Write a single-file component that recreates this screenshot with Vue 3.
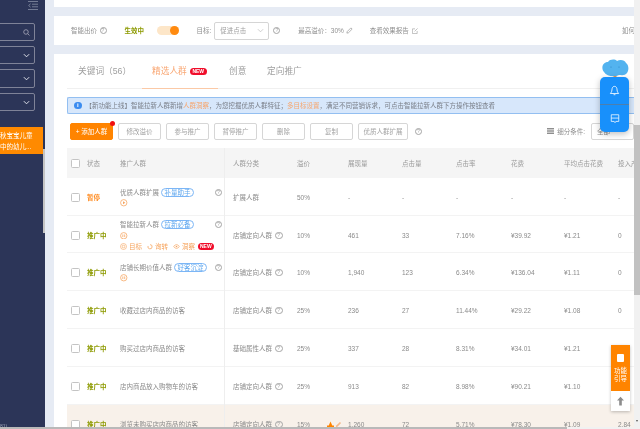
<script setup>
const buttons = ['修改溢价', '参与推广', '暂停推广', '删除', '复制']
const columns = ['展现量', '点击量', '点击率', '花费', '平均点击花费', '投入产']
const rows = [
  { paused: true, name: '优质人群扩展', tag: '补量助手', icon: 'play', help: true, category: '扩展人群', noHelp: true, premium: '50%', values: ['-', '-', '-', '-', '-', '-'] },
  { name: '智能拉新人群', tag: '拉新必备', icon: 'pause', help: true, extras: true, category: '店铺定向人群', premium: '10%', values: ['461', '33', '7.16%', '¥39.92', '¥1.21', '0'] },
  { name: '店铺长期价值人群', tag: '好客沉淀', icon: 'pause', help: true, category: '店铺定向人群', premium: '10%', values: ['1,940', '123', '6.34%', '¥136.04', '¥1.11', '0'] },
  { name: '收藏过店内商品的访客', category: '店铺定向人群', premium: '25%', values: ['236', '27', '11.44%', '¥29.22', '¥1.08', '0'] },
  { name: '购买过店内商品的访客', category: '基础属性人群', premium: '25%', values: ['337', '28', '8.31%', '¥34.01', '¥1.21', '0'] },
  { name: '店内商品放入购物车的访客', category: '店铺定向人群', premium: '25%', values: ['913', '82', '8.98%', '¥90.21', '¥1.10', '0'] },
  { name: '浏览未购买店内商品的访客', category: '店铺定向人群', premium: '15%', hot: true, values: ['1,260', '72', '5.71%', '¥78.30', '¥1.09', '2.84'] }
]
</script>

<template>
  <div class="page">
    <div class="body">
      <aside class="side">
        <svg class="menu-icon" viewBox="0 0 10 9" width="10" height="9">
          <path d="M0 .5h10M4 3.2h6M4 5.8h6M0 8.5h10M2.6 2.8 .6 4.5l2 1.7" fill="none" stroke="#7d849c" stroke-width=".9" />
        </svg>
        <div class="side-field search">
          <svg viewBox="0 0 8 8" width="7" height="7"><circle cx="3.4" cy="3.4" r="2.6" fill="none" stroke="#aab" stroke-width=".9" /><path d="M5.4 5.4 7.4 7.4" stroke="#aab" stroke-width=".9" /></svg>
        </div>
        <div v-for="n in 3" :key="n" class="side-field" :class="'sel' + n">
          <svg viewBox="0 0 8 5" width="7" height="5"><path d="M1 1l3 3 3-3" fill="none" stroke="#e4e6ee" stroke-width="1.1" /></svg>
        </div>
        <div class="side-active">
          <span>秋宝宝儿童</span>
          <span>中的幼儿...</span>
        </div>
        <div class="side-thumb"></div>
        <span class="side-foot">81)</span>
      </aside>

      <main class="main">
        <div class="card stub"></div>

        <section class="card bid">
          <span class="muted">智能出价</span><i class="q bid-q">?</i>
          <span class="live">生效中</span>
          <span class="toggle"><b></b></span>
          <span class="muted goal">目标:</span>
          <span class="goal-select">促进点击
            <svg viewBox="0 0 8 5" width="7" height="5"><path d="M1 1l3 3 3-3" fill="none" stroke="#bbb" stroke-width=".8" /></svg>
          </span>
          <i class="q goal-q">?</i>
          <span class="muted cap">最高溢价：30%</span>
          <svg class="pen" viewBox="0 0 8 8" width="7" height="7"><path d="M1 7l.4-1.8L5.6 1 7 2.4 2.8 6.6z" fill="none" stroke="#888" stroke-width=".7" /></svg>
          <span class="muted report">查看效果报告</span>
          <svg class="ext" viewBox="0 0 7 7" width="6" height="6"><path d="M6 3.5V6.5H.5V1H3.5M3 4 6.5.5" fill="none" stroke="#999" stroke-width=".7" /></svg>
          <span class="muted how">如何</span>
        </section>

        <section class="card panel">
          <nav class="tabs">
            <span class="tab t1">关键词（56）</span>
            <span class="tab t2 on">精选人群<em class="new big">NEW</em></span>
            <span class="tab t3">创意</span>
            <span class="tab t4">定向推广</span>
          </nav>

          <div class="notice">
            <span class="info">i</span>
            <span>【新功能上线】智能拉新人群新增<a>人群洞察</a>，为您挖掘优质人群特征；<a>多目标设置</a>，满足不同营销诉求，可点击智能拉新人群下方操作按钮查看</span>
          </div>

          <div class="actions">
            <button class="btn primary">+ 添加人群<i class="dot"></i></button>
            <button v-for="b in buttons" :key="b" class="btn">{{ b }}</button>
            <button class="btn wide">优质人群扩展</button>
            <i class="q act-q">?</i>
            <span class="filter">
              <svg viewBox="0 0 8 6" width="7" height="6"><path d="M0 .5h8M0 3h8M0 5.5h8" stroke="#555" stroke-width="1.1" /></svg>
              <span class="muted">细分条件:</span>
              <span class="filter-select">全部</span>
            </span>
          </div>

          <div class="table">
            <div class="row head">
              <span class="c-check"><i class="box"></i></span>
              <span class="c-status">状态</span>
              <span class="c-name">推广人群</span>
              <span class="c-cat">人群分类</span>
              <span>溢价</span>
              <span v-for="c in columns" :key="c">{{ c }}</span>
            </div>
            <div v-for="r in rows" :key="r.name" class="row" :class="{ hot: r.hot }">
              <span class="c-check"><i class="box"></i></span>
              <span class="c-status" :class="r.paused ? 'paused' : 'running'">{{ r.paused ? '暂停' : '推广中' }}</span>
              <div class="c-name">
                <div class="line">
                  <span>{{ r.name }}</span>
                  <span v-if="r.tag" class="pill">{{ r.tag }}</span>
                  <i v-if="r.help" class="q name-q">?</i>
                </div>
                <div v-if="r.icon" class="line">
                  <svg viewBox="0 0 8 8" width="7.5" height="7.5">
                    <circle cx="4" cy="4" r="3.4" fill="none" stroke="#f6a35c" stroke-width=".8" />
                    <path v-if="r.icon === 'play'" d="M3.2 2.4 5.6 4 3.2 5.6z" fill="#f6a35c" />
                    <path v-else d="M3 2.6v2.8M5 2.6v2.8" stroke="#f6a35c" stroke-width=".8" />
                  </svg>
                </div>
                <div v-if="r.extras" class="line links">
                  <svg viewBox="0 0 8 8" width="7" height="7"><circle cx="4" cy="4" r="3.4" fill="none" stroke="#f6a35c" stroke-width=".7" /><circle cx="4" cy="4" r="1.5" fill="none" stroke="#f6a35c" stroke-width=".7" /></svg>
                  <span>目标</span>
                  <svg class="gap" viewBox="0 0 8 8" width="6" height="7"><path d="M4 1.5a2.8 2.8 0 1 1-2.6 1.8" fill="none" stroke="#f6a35c" stroke-width="1" /></svg>
                  <span>询转</span>
                  <svg class="gap" viewBox="0 0 8 6" width="7" height="5"><path d="M.5 3Q4-1.5 7.5 3 4 7.5.5 3z" fill="none" stroke="#f6a35c" stroke-width=".8" /><circle cx="4" cy="3" r="1" fill="#f6a35c" /></svg>
                  <span>洞察</span>
                  <em class="new">NEW</em>
                </div>
              </div>
              <span class="c-cat">{{ r.category }}<i v-if="!r.noHelp" class="q cat-q">?</i></span>
              <span class="c-premium">{{ r.premium }}
                <span v-if="r.hot" class="marks">
                  <svg viewBox="0 0 8 8" width="7" height="7"><path d="M4 .5 6 5H8V7.5H0V5H2z" fill="#ff8400" /></svg>
                  <svg viewBox="0 0 8 8" width="7" height="7"><path d="M1 7l.4-1.8L5.6 1 7 2.4 2.8 6.6z" fill="#f6b98a" /></svg>
                </span>
              </span>
              <span v-for="(v, i) in r.values" :key="i">{{ v }}</span>
            </div>
          </div>
        </section>
      </main>

      <div class="vbar"><div class="vthumb"></div><i class="arrow"></i></div>
    </div>
    <div class="hbar"><div class="hthumb"></div></div>

    <div class="assistant">
      <svg class="cloud" viewBox="0 0 28 20" width="28" height="20">
        <path d="M3 13C-.5 9 2 3 7 3 9 0 14 0 16 2 19 0 24 1 25 4 28 6 28 11 26 14 24 17 20 16 18 16 14 18 6 18 3 13Z" fill="#53b3ef" />
        <path d="M12.5 17h3v3h-3z" fill="#e79a4a" />
        <circle cx="10" cy="8" r=".6" fill="#2c86c8" /><circle cx="18" cy="8" r=".6" fill="#2c86c8" />
      </svg>
      <div class="assist-panel">
        <div class="assist-item">
          <svg viewBox="0 0 12 12" width="11" height="11"><path d="M6 1.5C3.8 1.5 3.3 3.5 3.2 5.5 3.1 7.5 2 8.5 1.5 9.3H10.5C10 8.5 8.9 7.5 8.8 5.5 8.7 3.5 8.2 1.5 6 1.5ZM5 10.6H7" fill="none" stroke="#fff" stroke-width=".9" /></svg>
        </div>
        <div class="assist-item">
          <svg viewBox="0 0 12 12" width="10" height="11"><path d="M1.5 1.5H10.5V9.5H7L6 11 5 9.5H1.5ZM1.5 5.5H10.5" fill="none" stroke="#fff" stroke-width=".9" /></svg>
        </div>
      </div>
    </div>

    <div class="guide">
      <div class="guide-main">
        <i class="doc"></i>
        <span>功能</span>
        <span>引导</span>
      </div>
      <div class="guide-top">
        <svg viewBox="0 0 8 10" width="7" height="10"><path d="M4 0 8 4.5H5.5V10h-3V4.5H0z" fill="#8c8c8c" /></svg>
      </div>
    </div>
  </div>
</template>

<style>
html, body { margin: 0; overflow: hidden; }
</style>

<style scoped>
.page {
  position: relative;
  width: 640px;
  height: 429px;
  overflow: hidden;
  display: flex;
  flex-direction: column;
  background: #e6ebf4;
  font: 6.5px/11px "Liberation Sans", "Noto Sans CJK SC", sans-serif;
  color: #8a8a8a;
  filter: blur(.4px);
}
i, em { font-style: normal; }
.body { flex: 1; min-height: 0; display: flex; }
.hbar { height: 2px; background: #f1f1f1; }
.hthumb { width: 567px; height: 2px; background: #b9b9b9; }

.side {
  position: relative;
  width: 45px;
  flex: none;
  background: #2c3558;
  overflow: hidden;
}
.menu-icon { position: absolute; left: 28px; top: 1px; }
.side-field {
  box-sizing: border-box;
  margin-left: -8px;
  width: 43px;
  border: 1px solid #7f8398;
  border-radius: 2px;
  display: flex;
  align-items: center;
  justify-content: flex-end;
  padding-right: 4px;
}
.search { margin-top: 23px; width: 42.5px; height: 18px; }
.sel1 { margin-top: 5px; height: 18px; }
.sel2 { margin-top: 5px; height: 19px; }
.sel3 { margin-top: 5px; height: 18px; }
.side-active {
  margin-top: 16px;
  width: 42.5px;
  height: 27px;
  box-sizing: border-box;
  background: #ff8a00;
  color: #fff;
  display: flex;
  flex-direction: column;
  justify-content: center;
  overflow: hidden;
  white-space: nowrap;
  padding-left: 0;
}
.side-thumb { position: absolute; right: 0; top: 149px; width: 2.5px; height: 84px; background: #c4c4c4; }
.side-foot { position: absolute; left: 0; bottom: -5px; color: #9aa0b4; font-size: 5px; }

.main {
  flex: 1;
  min-width: 0;
  padding-left: 9px;
  overflow: hidden;
  display: flex;
  flex-direction: column;
  gap: 9px;
}
.card { background: #fff; flex: none; }
.stub { height: 7px; }
.muted { color: #8f8f8f; }

.bid {
  height: 29px;
  display: flex;
  align-items: center;
  padding-left: 17px;
  white-space: nowrap;
  overflow: hidden;
}
.q {
  box-sizing: border-box;
  display: inline-flex;
  align-items: center;
  justify-content: center;
  width: 7px;
  height: 7px;
  flex: none;
  border: .7px solid #a5a5a5;
  border-radius: 50%;
  font-size: 5px;
  line-height: 1;
  color: #a0a0a0;
}
.bid-q { margin-left: 2.5px; }
.live { margin-left: 18px; color: #8d9a00; font-weight: 700; }
.toggle {
  margin-left: 12.5px;
  width: 22px;
  height: 9px;
  border-radius: 5px;
  background: #fde6c8;
  position: relative;
}
.toggle b { position: absolute; right: 0; top: 0; width: 9px; height: 9px; border-radius: 50%; background: #ff8a10; }
.goal { margin-left: 18px; }
.goal-select {
  box-sizing: border-box;
  margin-left: 3px;
  width: 55px;
  height: 18px;
  border: 1px solid #d5d5d5;
  border-radius: 2px;
  display: flex;
  align-items: center;
  justify-content: space-between;
  padding: 0 4px 0 5px;
  color: #a0a0a0;
}
.goal-q { margin-left: 4px; }
.cap { margin-left: 18px; }
.pen { margin-left: 2px; }
.report { margin-left: 17px; }
.ext { margin-left: 3px; }
.how { margin-left: auto; width: 12px; overflow: hidden; flex: none; }

.panel { flex: 1; min-height: 0; padding-left: 13px; overflow: hidden; }
.tabs {
  height: 34px;
  display: flex;
  align-items: center;
  border-bottom: 1px solid #f0f0f0;
  font-size: 8.7px;
  color: #a0a0a0;
  position: relative;
}
.tab { white-space: nowrap; display: flex; align-items: center; height: 34px; }
.t1 { margin-left: 11px; width: 64px; }
.t2 {
  width: 76px;
  box-sizing: border-box;
  padding-left: 10px;
  color: #f9a875;
  border-bottom: 1px solid #fbc9a6;
  margin-bottom: -1px;
}
.t3 { margin-left: 11px; width: 38px; }
.new {
  margin-left: 3px;
  padding: 0 2px;
  height: 7px;
  line-height: 7px;
  border-radius: 4px;
  background: #f00d2a;
  color: #fff;
  font-size: 5px;
  font-weight: 700;
}
.new.big { width: 13px; height: 7px; text-align: center; border-radius: 4px; }

.notice {
  box-sizing: border-box;
  margin-top: 8px;
  height: 17px;
  background: #d7e7fb;
  border: 1px solid #93bff1;
  border-left-width: 1px;
  border-right: 0;
  border-radius: 2px 0 0 2px;
  display: flex;
  align-items: center;
  padding-left: 6px;
  gap: 4px;
  white-space: nowrap;
  color: #7a7f88;
}
.notice a { color: #f7a56c; }
.info {
  width: 7.5px;
  height: 7.5px;
  border-radius: 50%;
  background: #3b8cf0;
  color: #fff;
  font-size: 6px;
  font-weight: 700;
  line-height: 7.5px;
  text-align: center;
}
.actions { margin-top: 8px; height: 18px; display: flex; align-items: center; padding-left: 3px; gap: 5px; }
.btn {
  box-sizing: border-box;
  position: relative;
  width: 43px;
  height: 17px;
  padding: 0;
  border: 1px solid #d6d6d6;
  border-radius: 2px;
  background: #fff;
  color: #a3a3a3;
  font: inherit;
  white-space: nowrap;
}
.wide { width: 50px; }
.primary { background: #ff8400; border-color: #ff8400; color: #fff; }
.dot { position: absolute; right: -3px; top: -3px; width: 5px; height: 5px; border-radius: 50%; background: #f01010; }
.act-q { margin-left: 2px; }
.filter { margin-left: auto; display: flex; align-items: center; gap: 3px; }
.filter-select {
  box-sizing: border-box;
  margin-left: 3px;
  width: 43px;
  height: 17px;
  line-height: 15px;
  border: 1px solid #d6d6d6;
  border-radius: 2px;
  padding-left: 5px;
}

.table { margin-top: 8px; }
.row {
  display: grid;
  grid-template-columns: 20px 33px 104px 73px 51px 54px 54px 55px 53px 54px 16px;
  height: 38px;
  align-items: center;
  box-shadow: inset 0 -1px 0 #f3f3f3;
  box-sizing: border-box;
  white-space: nowrap;
  overflow: hidden;
  padding-top: 1px;
}
.row:nth-child(3) { height: 37px; }
.row > span { overflow: visible; }
.head { height: 30px; background: #f5f5f5; box-shadow: none; color: #9a9a9a; padding-top: 0; }
.hot { background: #f8f1ea; }
.c-check { display: flex; align-items: center; padding-left: 4px; }
.box {
  box-sizing: border-box;
  width: 9px;
  height: 9px;
  border: 1px solid #c4c4c4;
  border-radius: 1.5px;
  background: #fff;
}
.paused { color: #ff8a1e; font-weight: 700; }
.running { color: #8d9a00; font-weight: 700; }
.c-name { position: relative; align-self: center; }
.line { height: 11px; display: flex; align-items: center; }
.pill {
  box-sizing: border-box;
  margin-left: 2px;
  height: 9px;
  line-height: 7px;
  padding: 0 2.5px;
  border: .8px solid #7cb6f6;
  border-radius: 5px;
  color: #5ea7ef;
}
.name-q { position: absolute; left: 95px; top: 2px; }
.links { color: #f6a35c; }
.links span { margin-left: 2px; }
.links .gap { margin-left: 5px; }
.links .new { margin-left: 3px; }
.c-cat { height: 38px; margin-top: -1px; box-sizing: border-box; border-left: 1px solid #eee; padding: 1px 0 0 8px; display: flex; align-items: center; }
.head .c-cat { height: 30px; margin-top: 0; padding-top: 0; }
.cat-q { margin-left: 3px; width: 7.5px; height: 7.5px; }
.c-premium { position: relative; }
.marks { position: absolute; left: 30px; top: 2px; display: flex; gap: 1px; }

.vbar { position: relative; width: 6px; flex: none; background: #f1f1f1; }
.vthumb { position: absolute; top: 125px; left: 0; width: 6px; height: 170px; background: #c1c1c1; }
.arrow { position: absolute; left: 1.5px; bottom: 4px; border: 1.5px solid transparent; border-top: 2px solid #555; }

.assistant { position: absolute; left: 600px; top: 59px; width: 29px; display: flex; flex-direction: column; align-items: center; }
.cloud { margin-bottom: -2px; }
.assist-panel {
  width: 29px;
  height: 55px;
  border-radius: 5px;
  background: #1890fb;
  box-shadow: 0 2px 6px rgba(0, 0, 0, .25);
  display: flex;
  flex-direction: column;
}
.assist-item { flex: 1; display: flex; align-items: center; justify-content: center; }
.assist-item + .assist-item { border-top: 1px solid #4d7fae; }

.guide { position: absolute; left: 611px; top: 345px; width: 19px; box-shadow: 0 1px 3px rgba(0, 0, 0, .25); }
.guide-main {
  height: 46px;
  background: #ff8400;
  color: #fff;
  display: flex;
  flex-direction: column;
  align-items: center;
  line-height: 8px;
  box-sizing: border-box;
  padding-top: 9px;
}
.doc { width: 7px; height: 8px; background: #fff; margin-bottom: 5px; border-radius: 1px; }
.guide-top { height: 20px; background: #fff; display: flex; align-items: center; justify-content: center; }
</style>
